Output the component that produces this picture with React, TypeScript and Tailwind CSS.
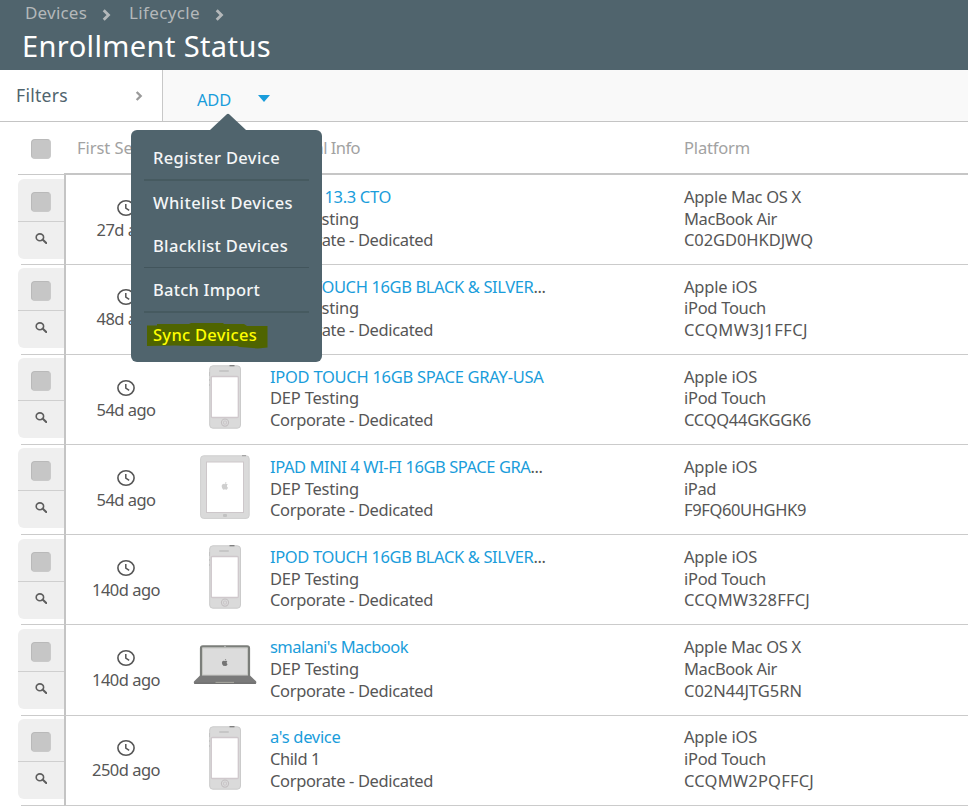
import { useLayoutEffect, useRef, useState } from "react";

type DeviceKind = "mac" | "phone" | "tablet";

interface Device {
  age: [string, number];
  kind: DeviceKind;
  title: [string, number];
  truncated?: boolean;
  group: [string, number];
  os: [string, number];
  model: [string, number];
  serial: [string, number];
}

const DEP: [string, number] = ["DEP Testing", 89];
const IOS: [string, number] = ["Apple iOS", 73];
const MAC_OS: [string, number] = ["Apple Mac OS X", 117];
const IPOD: [string, number] = ["iPod Touch", 82];
const AIR: [string, number] = ["MacBook Air", 93];

const devices: Device[] = [
  { age: ["27d ago", 59], kind: "mac", title: ["MBAIR 13.3 CTO", 121], group: DEP, os: MAC_OS, model: AIR, serial: ["C02GD0HKDJWQ", 129] },
  { age: ["48d ago", 59], kind: "phone", title: ["IPOD TOUCH 16GB BLACK & SILVER", 263.5], truncated: true, group: DEP, os: IOS, model: IPOD, serial: ["CCQMW3J1FFCJ", 124] },
  { age: ["54d ago", 59], kind: "phone", title: ["IPOD TOUCH 16GB SPACE GRAY-USA", 273.5], group: DEP, os: IOS, model: IPOD, serial: ["CCQQ44GKGGK6", 127] },
  { age: ["54d ago", 59], kind: "tablet", title: ["IPAD MINI 4 WI-FI 16GB SPACE GRA", 260.5], truncated: true, group: DEP, os: IOS, model: ["iPad", 32], serial: ["F9FQ60UHGHK9", 122] },
  { age: ["140d ago", 68], kind: "phone", title: ["IPOD TOUCH 16GB BLACK & SILVER", 263.5], truncated: true, group: DEP, os: IOS, model: IPOD, serial: ["CCQMW328FFCJ", 126] },
  { age: ["140d ago", 68], kind: "mac", title: ["smalani's Macbook", 138], group: DEP, os: MAC_OS, model: AIR, serial: ["C02N44JTG5RN", 118] },
  { age: ["250d ago", 68], kind: "phone", title: ["a's device", 70.5], group: ["Child 1", 50], os: IOS, model: IPOD, serial: ["CCQMW2PQFFCJ", 130] },
];

/* Text whose tracking is adjusted so that it fills the given width. */
function Label({ text, width, className = "" }: { text: string; width: number; className?: string }) {
  const ref = useRef<HTMLSpanElement>(null);
  const [spacing, setSpacing] = useState(0);
  useLayoutEffect(() => {
    if (ref.current) {
      setSpacing((width - ref.current.getBoundingClientRect().width) / text.length);
    }
  }, [text, width]);
  return (
    <span ref={ref} className={"inline-block whitespace-pre " + className} style={{ letterSpacing: spacing }}>
      {text}
    </span>
  );
}

function Chevron({ className }: { className: string }) {
  return (
    <svg viewBox="0 0 8 12" className={className} fill="none" stroke="currentColor" strokeWidth="2.8">
      <path d="M1.2 1.2 6 6 1.2 10.8" />
    </svg>
  );
}

function Checkbox() {
  return <div className="h-5 w-5 rounded-[4px] border border-[#b9b9b9] border-r-[#c9c9c9] border-b-[#c9c9c9] bg-[#c6c6c6]" />;
}

function Magnifier() {
  return (
    <svg viewBox="0 0 12 11" className="h-[11px] w-3" fill="none" stroke="#5e5e5e">
      <ellipse cx="4.9" cy="4.3" rx="3.7" ry="3.4" strokeWidth="1.6" />
      <path d="M7.6 6.6 11.2 10" strokeWidth="2.1" strokeLinecap="round" />
    </svg>
  );
}

function Clock() {
  return (
    <svg viewBox="0 0 18 16" className="h-4 w-[18px]" fill="none" stroke="#555">
      <ellipse cx="9" cy="8" rx="8.1" ry="7.2" strokeWidth="1.6" />
      <path d="M8.8 4V8.200l3.400 2.200" strokeWidth="1.500" />
    </svg>
  );
}

const APPLE_BODY =
  "M12.15 6.9c-.95 0-2.42-1.08-3.96-1.04-2.04.03-3.91 1.18-4.96 3.01-2.12 3.68-.55 9.1 1.52 12.09 1.01 1.45 2.21 3.09 3.79 3.04 1.52-.07 2.09-.99 3.94-.99 1.83 0 2.35.99 3.96.95 1.64-.03 2.68-1.48 3.68-2.95 1.16-1.69 1.64-3.33 1.66-3.42-.04-.01-3.18-1.22-3.22-4.86-.03-3.04 2.48-4.49 2.6-4.56-1.43-2.09-3.62-2.32-4.39-2.38-2-.16-3.68 1.09-4.62 1.09zM15.53 3.83c.84-1.01 1.4-2.43 1.25-3.83-1.21.05-2.66.81-3.53 1.82-.78.9-1.45 2.34-1.27 3.71 1.34.1 2.72-.69 3.56-1.7";

function DevicePicture({ kind }: { kind: DeviceKind }) {
  if (kind === "phone") {
    return (
      <svg viewBox="0 0 32 64" className="h-16 w-8">
        <path d="M.5 7v4M.5 14v2M.5 19v2" stroke="#8d8d8d" />
        <rect x=".7" y=".8" width="30.8" height="62.4" rx="3.2" fill="#dadada" stroke="#cbcbcb" />
        <path d="M20.5.7h5" stroke="#777" strokeWidth="1.2" />
        <rect x="10" y="5" width="10" height="2" rx="1" fill="#c6c6c6" />
        <rect x="2.3" y="11.5" width="27" height="41" rx="1" fill="#fff" stroke="#cfc8cc" strokeWidth="1.3" />
        <circle cx="16" cy="57.6" r="3.6" fill="none" stroke="#c3bfc1" strokeWidth="1.1" />
        <rect x="14.5" y="56.1" width="3" height="3" rx=".7" fill="none" stroke="#c6c2c4" strokeWidth=".8" />
      </svg>
    );
  }
  if (kind === "tablet") {
    return (
      <svg viewBox="0 0 50 64" className="h-16 w-[50px]">
        <rect x=".6" y=".8" width="48.6" height="62.6" rx="3" fill="#dadada" stroke="#cfcfcf" />
        <path d="M42 .7h4" stroke="#999" />
        <rect x="6.5" y="7" width="37" height="50.5" fill="#fff" stroke="#cdc7ca" />
        <g transform="translate(21 27) scale(.32)" fill="#cfcfcf">
          <path d={APPLE_BODY} />
        </g>
        <rect x="23" y="59" width="4" height="3" rx="1" fill="#c2c2c2" />
      </svg>
    );
  }
  return (
    <svg viewBox="0 0 64 41" className="h-[41px] w-16">
      <rect x="8" y="1.4" width="48" height="33" rx="1.8" fill="#dcdcdc" stroke="#7b7e7a" strokeWidth="2.2" />
      <rect x="9.6" y="3" width="44.8" height="27" fill="none" stroke="#c2c4be" strokeWidth=".8" />
      <circle cx="32" cy="1.5" r=".7" fill="#ccc" />
      <path d="M7 30.500h50l6 5.800c.6.7.4 2.700-.8 2.700H2c-1.300 0-1.500-2-.8-2.700z" fill="#7a7a7a" />
      <path d="M1.500 38.200h61" stroke="#6c6c6c" strokeWidth=".8" />
      <path d="M22.500 37.400h18.500" stroke="#a8a8a0" strokeWidth="1" />
      <g transform="translate(28.300 14) scale(.29)" fill="#747474">
        <path d={APPLE_BODY} />
      </g>
    </svg>
  );
}

function DeviceRow({ device, first }: { device: Device; first: boolean }) {
  return (
    <div className={first ? "flex h-[89.8px]" : "flex h-[90.15px]"}>
      <div className={"ml-[18px] flex w-[46px] flex-col justify-between " + (first ? "pt-1" : "pt-[3.3px]")}>
        <div className="h-20 rounded-l-[6px] bg-[#efefef]">
          <div className="flex h-[43px] items-start border-b-[1.5px] border-[#cfcfcf] pt-[13px] pl-[13px]">
            <Checkbox />
          </div>
          <div className="pt-[11px] pl-[17px]">
            <Magnifier />
          </div>
        </div>
        <div className="ml-[3px] h-px bg-[#cbcbcb]" />
      </div>
      <div className="flex flex-1 border-b border-l-2 border-b-[#cbcbcb] border-l-[#c4c4c4] text-[16.5px] leading-[21.7px] text-[#565656]">
        <div className="flex w-[120px] flex-col items-center pt-[24.6px]">
          <Clock />
          <Label text={device.age[0]} width={device.age[1]} className="mt-[3px]" />
        </div>
        <div className={"flex w-[78px] justify-center " + (device.kind === "mac" ? "pt-5" : "pt-[10px]")}>
          <DevicePicture kind={device.kind} />
        </div>
        <div className="w-[414px] pt-[10.8px] pl-[6px]">
          <div className="flex text-[#1a9ddb]">
            <Label text={device.title[0]} width={device.title[1]} />
            {device.truncated && <Label text="..." width={12} className="text-[#565656]" />}
          </div>
          <div><Label text={device.group[0]} width={device.group[1]} /></div>
          <div><Label text="Corporate - Dedicated" width={163} /></div>
        </div>
        <div className="pt-[10.8px] pl-[6px]">
          <div><Label text={device.os[0]} width={device.os[1]} /></div>
          <div><Label text={device.model[0]} width={device.model[1]} /></div>
          <div><Label text={device.serial[0]} width={device.serial[1]} /></div>
        </div>
      </div>
    </div>
  );
}

function AddMenu() {
  return (
    <div className="absolute top-[43px] -left-[32px] z-10 w-[191px]">
      <svg viewBox="0 0 36 17" className="ml-[79px] block h-[17px] w-9" fill="#50646d">
        <path d="M0 17 16.8 1.3Q18 .2 19.2 1.3L36 17z" />
      </svg>
      <div className="h-[232px] rounded-[6px] bg-[#50646d] px-[13px] text-[16.500px] font-medium text-[#f4f6f7]">
        <div className="flex h-[51px] items-center border-b-2 border-[#465a60] pt-[8px] pl-[9px]">
          <Label text="Register Device" width={127} />
        </div>
        <div className="flex h-[43px] items-center pt-px pl-[9px]">
          <Label text="Whitelist Devices" width={140} />
        </div>
        <div className="flex h-[44px] items-center border-b border-[#42555c] pt-px pl-[9px]">
          <Label text="Blacklist Devices" width={135} />
        </div>
        <div className="flex h-[45px] items-center border-b-2 border-[#465a60] pt-[2px] pl-[9px]">
          <Label text="Batch Import" width={107} />
        </div>
        <div className="relative flex h-[44px] items-center pl-[9px] text-[#ffff00]">
          <svg viewBox="0 0 121 26" className="absolute top-[10px] left-[3px] h-[26px] w-[121px]" fill="#4f6400">
            <path d="M0 2.5H10V1L42 1 44 0H76L77 1H97L100 3H120.5V24.5L111 25.5 93 24 90 23H44L28 22.5 0 23z" />
          </svg>
          <Label text="Sync Devices" width={104} className="relative" />
        </div>
      </div>
    </div>
  );
}

export default function App() {
  return (
    <div className="h-[812px] w-[968px] overflow-hidden bg-white font-['Noto_Sans',sans-serif]">
      <header className="h-[70px] bg-[#50646d]">
        <div className="flex h-[25px] items-center pl-[25px] text-[17px] leading-none text-[#b4b8ba]">
          <Label text="Devices" width={62} />
          <Chevron className="mt-[4px] ml-[15px] h-3 w-[9px]" />
          <Label text="Lifecycle" width={71} className="ml-[18px]" />
          <Chevron className="mt-[4px] ml-[15px] h-3 w-[9px]" />
        </div>
        <h1 className="flex h-10 items-center pl-[22px] text-[29px] leading-none text-white">
          <Label text="Enrollment Status" width={249} />
        </h1>
      </header>

      <div className="flex h-[52px] border-b border-[#c4c4c4] bg-[#f9f9f9]">
        <div className="flex w-[163px] items-center justify-between border-r border-[#c8c8c8] bg-white pr-[19px] pl-4 text-[17.5px] text-[#50646d]">
          <Label text="Filters" width={52} />
          <Chevron className="h-[10px] w-2 text-[#9a9a9a]" />
        </div>
        <div className="relative flex items-center pt-[10px] text-[16.5px] text-[#1a9ddb]">
          <Label text="ADD" width={34} className="ml-[34px]" />
          <svg viewBox="0 0 12 7" className="mb-[4px] ml-[27px] h-[7px] w-3" fill="currentColor">
            <path d="M0 0h12L6 7z" />
          </svg>
          <AddMenu />
        </div>
      </div>

      <div className="flex h-[53px]">
        <div className="ml-[18px] flex w-[46px] flex-col justify-between pt-[17px]">
          <div className="pl-[13px]"><Checkbox /></div>
          <div className="h-px bg-[#c9c9c9]" />
        </div>
        <div className="flex flex-1 border-b-2 border-[#c6c6c6] pt-px pl-[13px] text-[16.5px] text-[#a2a2a2]">
          <div className="flex w-[193px] items-center"><Label text="First Seen" width={75} /></div>
          <div className="flex w-[414px] items-center"><Label text="General Info" width={90} /></div>
          <div className="flex items-center"><Label text="Platform" width={66} /></div>
        </div>
      </div>

      {devices.map((device, i) => (
        <DeviceRow key={i} device={device} first={i === 0} />
      ))}
    </div>
  );
}
